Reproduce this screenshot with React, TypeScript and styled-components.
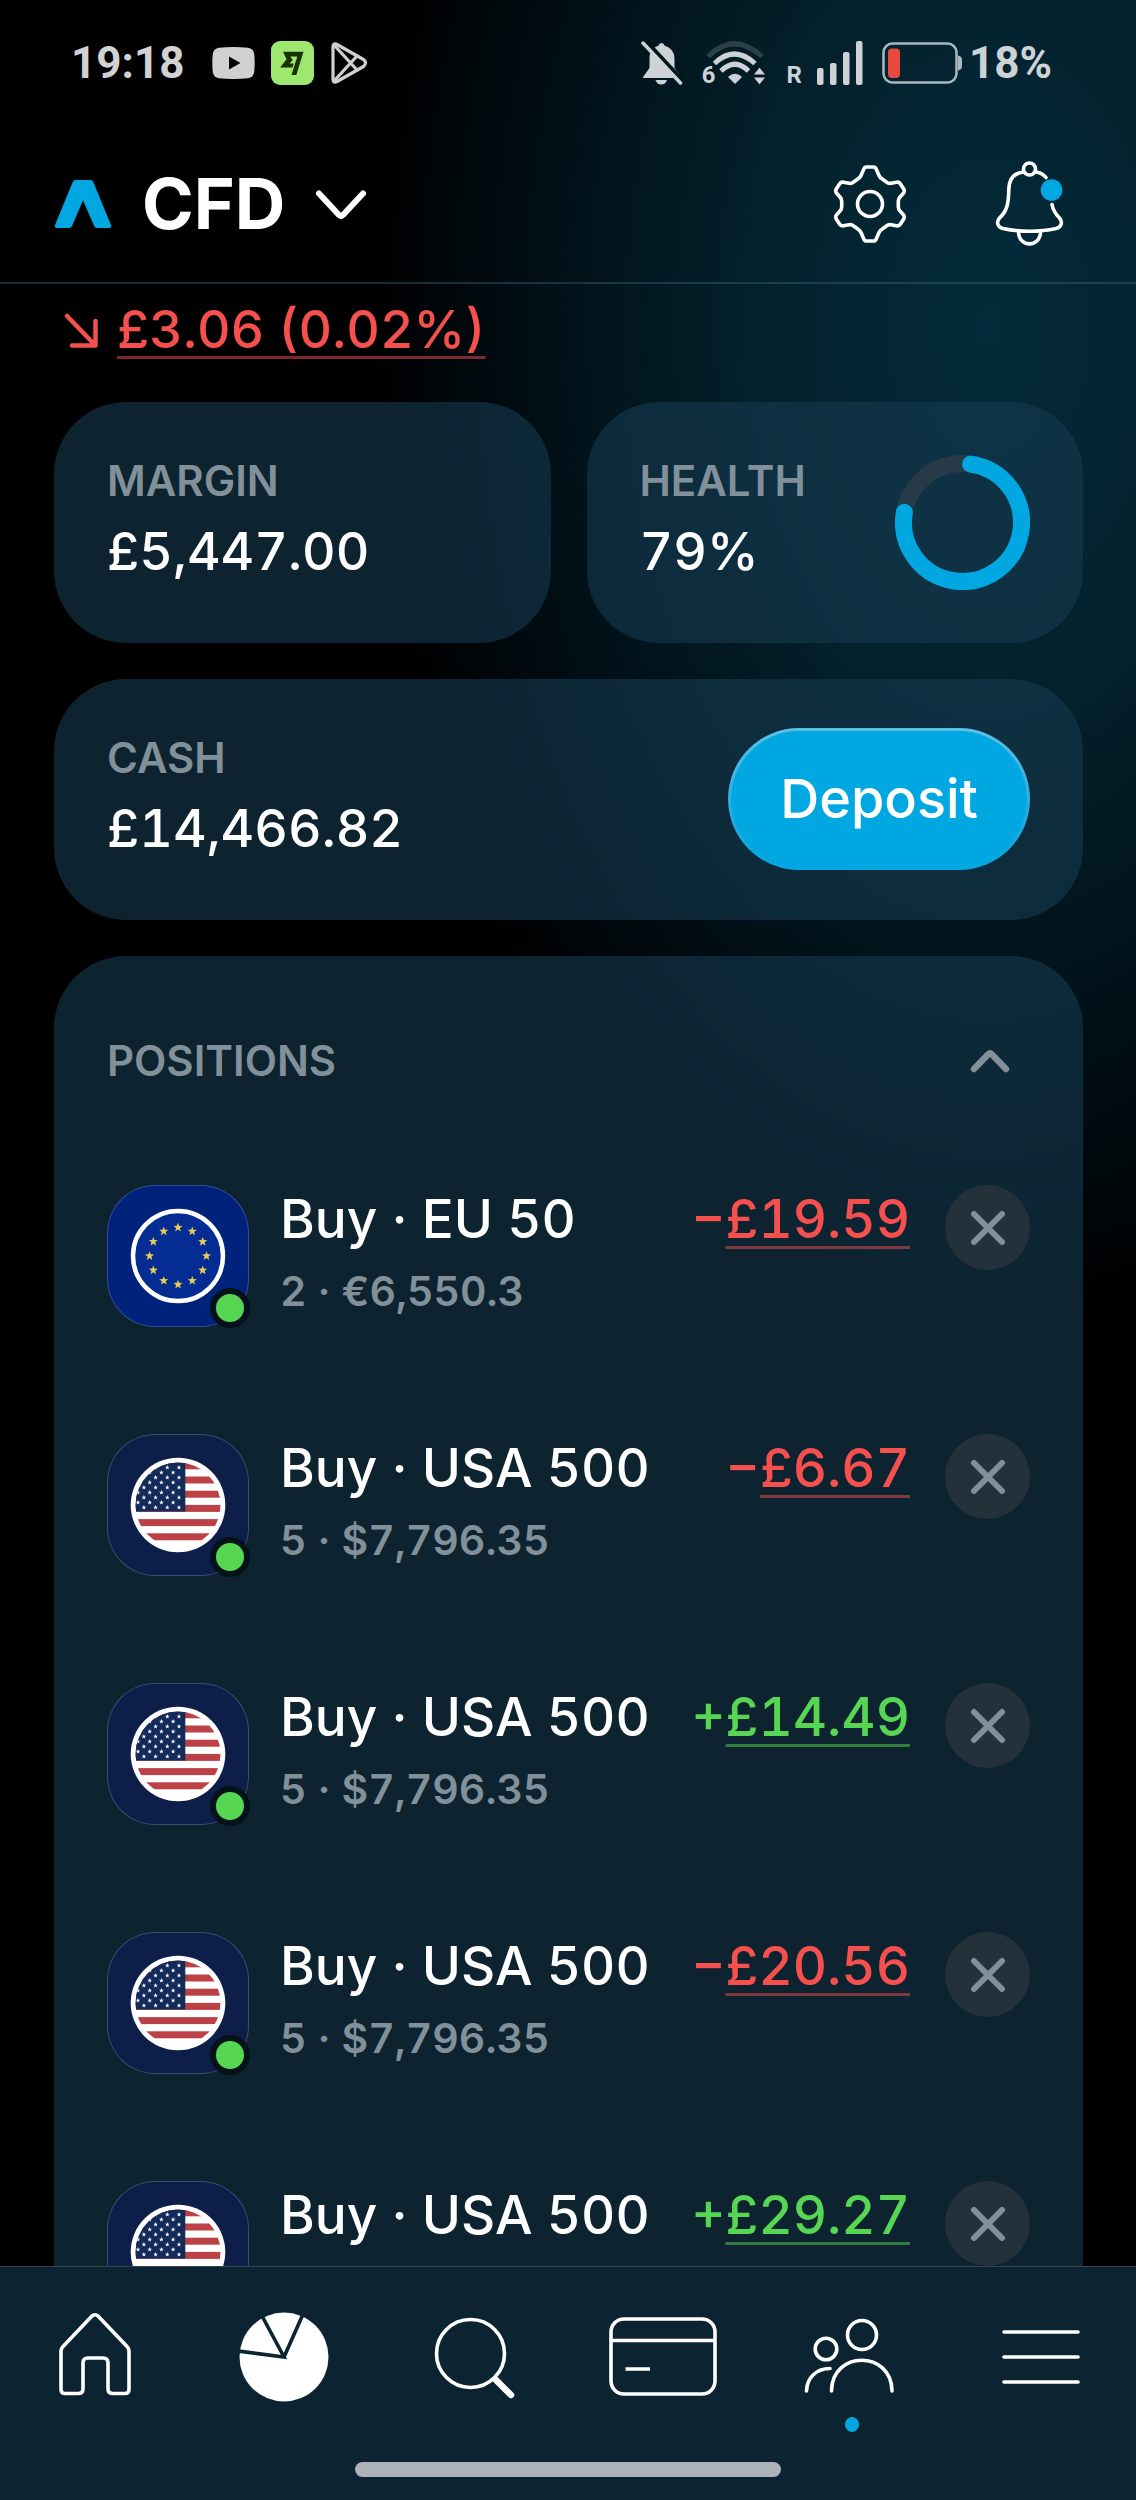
import React from "react";
import styled, { createGlobalStyle } from "styled-components";

const GlobalStyle = createGlobalStyle`
  *, *::before, *::after { box-sizing: border-box; }
  body { margin: 0; background: #000; }
  button, a { font: inherit; color: inherit; }
  h1, h2, p, ul { margin: 0; padding: 0; font: inherit; }
  svg { display: block; flex: none; }
`;

const color = {
  accent: "#00a7e1",
  loss: "#f5504e",
  gain: "#57d653",
  muted: "#82909a",
  status: "#ccd2d5",
  panel: "rgba(21, 58, 80, 0.6)",
  bar: "#0c2331",
};

const Screen = styled.div`
  height: 100vh;
  display: flex;
  flex-direction: column;
  overflow: hidden;
  color: #fff;
  font-family: Inter, "Liberation Sans", sans-serif;
  font-variant-numeric: tabular-nums;
  background:
    radial-gradient(ellipse 54% 40% at 87% 13%, #042b3b 0%, #03202b 40%, #01121a 68%, transparent 100%),
    #000;
`;

const StatusBar = styled.div`
  flex: none;
  height: 126px;
  padding: 0 84px 0 71px;
  display: flex;
  align-items: center;
  justify-content: space-between;
  color: ${color.status};
  font-family: Roboto, sans-serif;
  font-size: 44px;
  line-height: 56px;
  font-weight: 700;
`;

const StatusGroup = styled.div<{ $gap: number }>`
  display: flex;
  align-items: center;
  gap: ${(p) => p.$gap}px;
`;

const Clock = styled.time`
  color: #d2d2d2;
  margin-right: 12px;
`;

const BatteryGroup = styled.div`
  display: flex;
  align-items: center;
  gap: 6px;
`;

const RadioGroup = styled.div`
  display: flex;
  align-items: flex-end;
`;

const TinyMark = styled.span<{ $space: number }>`
  font-size: 24px;
  line-height: 20px;
  margin-right: ${(p) => p.$space}px;
`;

const AppHeader = styled.header`
  flex: none;
  height: 158px;
  padding: 0 69px 0 54px;
  display: flex;
  align-items: center;
  justify-content: space-between;
  border-bottom: 2px solid rgba(70, 120, 145, 0.35);
`;

const PlainButton = styled.button`
  display: flex;
  align-items: center;
  justify-content: center;
  padding: 0;
  border: 0;
  background: none;
  cursor: pointer;
`;

const AccountButton = styled(PlainButton)`
  gap: 30px;
`;

const AccountName = styled.span`
  font-size: 70px;
  line-height: 80px;
  font-weight: 700;
`;

const HeaderActions = styled.div`
  display: flex;
  align-items: center;
  gap: 84px;
`;

const Content = styled.main`
  flex: 1;
  min-height: 0;
  overflow-y: auto;
  scrollbar-width: none;
  padding: 10px 53px 0 54px;
  display: flex;
  flex-direction: column;
  gap: 36px;
`;

const Summary = styled.p`
  display: flex;
  align-items: center;
  gap: 18px;
  padding-left: 10px;
  font-size: 52px;
  line-height: 72px;
  font-weight: 500;
  color: ${color.loss};
`;

const Underlined = styled.span`
  text-decoration: underline;
  text-decoration-thickness: 3px;
  text-underline-offset: 8px;
  text-decoration-skip-ink: none;
  text-decoration-color: color-mix(in srgb, currentColor 50%, transparent);
`;

const StatGrid = styled.div`
  flex: none;
  display: grid;
  grid-template-columns: 1fr 1fr;
  gap: 36px;
`;

const Card = styled.section`
  flex: none;
  border-radius: 72px;
  background: ${color.panel};
  padding: 51px 53px 52px;
  display: flex;
  align-items: center;
  justify-content: space-between;
`;

const Stat = styled.div`
  display: flex;
  flex-direction: column;
  gap: 8px;
  padding-bottom: 4px;
`;

const Label = styled.h2`
  font-size: 42px;
  line-height: 56px;
  font-weight: 600;
  color: ${color.muted};
`;

const Value = styled.p`
  font-size: 52px;
  line-height: 70px;
  font-weight: 500;
`;

const DepositButton = styled.button`
  height: 142px;
  margin: -2px 0;
  padding: 0 49px;
  border: 3px solid transparent;
  border-radius: 71px;
  background:
    linear-gradient(${color.accent}, ${color.accent}) padding-box,
    linear-gradient(#5cc0e6, #2cade0 55%, ${color.accent}) border-box;
  color: #fff;
  font-size: 54px;
  font-weight: 500;
  line-height: 64px;
  cursor: pointer;
`;

const PositionsCard = styled.section`
  flex: none;
  border-radius: 72px 72px 0 0;
  background: ${color.panel};
  padding: 52px 53px 107px;
`;

const PositionsHead = styled.div`
  height: 106px;
  margin-bottom: 71px;
  display: flex;
  align-items: center;
  justify-content: space-between;
`;

const CollapseButton = styled(PlainButton)`
  width: 80px;
  height: 80px;
`;

const PositionList = styled.ul`
  list-style: none;
  display: flex;
  flex-direction: column;
  gap: 107px;
`;

const PositionRow = styled.li`
  display: flex;
  align-items: flex-start;
`;

const Tile = styled.div<{ $bg: string }>`
  position: relative;
  flex: none;
  width: 142px;
  height: 142px;
  margin-right: 31px;
  display: grid;
  place-items: center;
  border-radius: 48px;
  border: 1px solid rgba(255, 255, 255, 0.2);
  background: ${(p) => p.$bg};
`;

const OpenDot = styled.span`
  position: absolute;
  right: -2px;
  bottom: -2px;
  width: 40px;
  height: 40px;
  border-radius: 50%;
  border: 6px solid #04121a;
  background: ${color.gain};
`;

const Names = styled.div`
  flex: 1;
  min-width: 0;
  display: flex;
  flex-direction: column;
  gap: 10px;
`;

const Instrument = styled.p`
  font-size: 53px;
  line-height: 68px;
  font-weight: 500;
`;

const Holding = styled.p`
  font-size: 41px;
  line-height: 56px;
  font-weight: 600;
  color: ${color.muted};
`;

const Result = styled.p<{ $gain: boolean }>`
  margin-right: 35px;
  font-size: 53px;
  line-height: 68px;
  font-weight: 500;
  color: ${(p) => (p.$gain ? color.gain : color.loss)};
`;

const CloseButton = styled(PlainButton)`
  flex: none;
  width: 85px;
  height: 85px;
  border-radius: 50%;
  background: #23313b;
`;

const BottomBar = styled.footer`
  flex: none;
  height: 234px;
  border-top: 1px solid #33434f;
  background: ${color.bar};
  display: flex;
  flex-direction: column;
  align-items: center;
`;

const Tabs = styled.nav`
  width: 100%;
  height: 180px;
  display: grid;
  grid-template-columns: repeat(6, 1fr);
`;

const Tab = styled.a`
  position: relative;
  display: flex;
  align-items: center;
  justify-content: center;
`;

const TabDot = styled.span`
  position: absolute;
  left: calc(50% - 7px);
  bottom: 15px;
  width: 14px;
  height: 15px;
  border-radius: 50%;
  background: ${color.accent};
`;

const HomeHandle = styled.div`
  width: 37.5%;
  height: 15px;
  margin-top: 15px;
  border-radius: 8px;
  background: #abb2b9;
`;

const line = {
  fill: "none",
  stroke: "currentColor",
  strokeLinecap: "round" as const,
  strokeLinejoin: "round" as const,
};

function star(cx: number, cy: number, r: number) {
  const pts: string[] = [];
  for (let i = 0; i < 10; i++) {
    const a = -Math.PI / 2 + (i * Math.PI) / 5;
    const rad = i % 2 ? r * 0.42 : r;
    pts.push(`${(cx + rad * Math.cos(a)).toFixed(2)},${(cy + rad * Math.sin(a)).toFixed(2)}`);
  }
  return pts.join(" ");
}

function EuFlag() {
  return (
    <svg width="96" height="96" viewBox="-48 -48 96 96" aria-hidden="true">
      <circle r="45" fill="#042c92" stroke="#fff" strokeWidth="4.5" />
      {Array.from({ length: 12 }, (_, i) => {
        const a = (i * Math.PI) / 6;
        return <polygon key={i} points={star(28.5 * Math.sin(a), -28.5 * Math.cos(a), 4.8)} fill="#e6cb54" />;
      })}
    </svg>
  );
}

function UsFlag({ id }: { id: string }) {
  const stars: React.ReactNode[] = [];
  for (let row = 0; row < 9; row++) {
    for (let col = 0; col < 5; col++) {
      const x = 1 - col * 11.7 - (row % 2 ? 5.9 : 0);
      stars.push(<polygon key={`${row}-${col}`} points={star(x, -37.5 + row * 5, 2.4)} fill="#fff" />);
    }
  }
  return (
    <svg width="96" height="96" viewBox="-48 -48 96 96" aria-hidden="true">
      <clipPath id={id}>
        <circle r="42.5" />
      </clipPath>
      <circle r="47.3" fill="#fff" />
      <g clipPath={`url(#${id})`}>
        {[0, 1, 2, 3, 4, 5].map((i) => (
          <rect key={i} x="-43" y={-42.7 + i * 14.2} width="86" height="7" fill="#bb4147" />
        ))}
        <rect x="-43" y="-43" width="50.3" height="49.5" fill="#132b5b" />
        {stars}
      </g>
    </svg>
  );
}

const YouTubeIcon = () => (
  <svg width="43" height="32" viewBox="0 0 43 32" aria-hidden="true">
    <path d="M7 .8Q21.5-.8 36 .8Q41.500 1.500 42.200 7Q43.200 16 42.200 25Q41.500 30.500 36 31.200Q21.500 32.800 7 31.200Q1.500 30.500.8 25Q-.2 16 .8 7Q1.500 1.500 7 .8Z" fill="#d0d0d0" />
    <path d="M17 9.500L28.500 16L17 22.500Z" fill="#000" />
  </svg>
);

const TransferIcon = () => (
  <svg width="43" height="44" viewBox="0 0 43 44" aria-hidden="true">
    <rect width="43" height="44" rx="9" fill="#9fe870" />
    <path d="M12 10.700H32.500L25.300 34H20.500L26.300 15.500H19.300L21.700 19L18.600 22.600H22.800L21.500 26.500H9.200L15.500 18.300Z" fill="#163300" />
  </svg>
);

const PlayStoreIcon = () => (
  <svg width="38" height="44" viewBox="0 0 38 44" {...line} stroke="#d0d0d0" strokeWidth="3.200" aria-hidden="true">
    <path d="M3 6Q3 1.500 7 3.500L33.500 18.500Q37.500 22 33.500 25.500L7 40.500Q3 42.500 3 38Z" />
    <path d="M4.500 4.500L27 29M4.500 39.500L27 15" />
  </svg>
);

const SilentIcon = () => (
  <svg width="42" height="44" viewBox="0 0 42 44" aria-hidden="true">
    <path d="M17.500 4.500Q18 2 20.500 2Q23 2 23.500 4.500Q33 7.500 33.500 17V27L38 33.500V37H2V36L8.500 27V17Q8.500 7.500 17.500 4.500Z" fill="currentColor" />
    <path d="M14.500 39H26Q24.500 43.500 20.300 43.500Q16 43.500 14.500 39Z" fill="currentColor" />
    <path d="M5 0L42 40" stroke="#02141b" strokeWidth="4" />
    <path d="M2 2L39.500 42" stroke="currentColor" strokeWidth="3.500" strokeLinecap="round" />
  </svg>
);

const WifiIcon = () => (
  <svg width="64" height="44" viewBox="0 0 64 44" fill="none" stroke="currentColor" strokeWidth="5" aria-hidden="true">
    <path d="M4 15.500Q30 -10 58 15.500" stroke="#2a3f48" />
    <path d="M10.500 22.500Q30 3.500 51 22.500" />
    <path d="M17 30Q31 16.500 44.500 30" />
    <path d="M31 43L24 36Q31 29.500 38 36Z" fill="currentColor" stroke="none" />
    <path d="M49 34L55.500 26L62 34ZM49 36L55.500 44L62 36Z" fill="currentColor" stroke="#02161e" strokeWidth="1" />
  </svg>
);

const SignalIcon = () => (
  <svg width="46" height="44" viewBox="0 0 46 44" fill="currentColor" aria-hidden="true">
    <rect x="0" y="27" width="6.500" height="17" rx="2" />
    <rect x="13" y="22" width="6.500" height="22" rx="2" />
    <rect x="26" y="11" width="6.500" height="33" rx="2" />
    <rect x="39" y="0" width="6.500" height="44" rx="2" />
  </svg>
);

const BatteryIcon = () => (
  <svg width="81" height="42" viewBox="0 0 81 42" aria-hidden="true">
    <rect x="1.500" y="1.500" width="73" height="39" rx="9" fill="none" stroke="#a9b9bf" strokeWidth="2.500" />
    <rect x="6" y="6.500" width="12" height="29.500" rx="4" fill="#e8493e" />
    <path d="M76 13.500Q80 14 80 18V24Q80 28 76 28.500Z" fill="#a9b9bf" />
  </svg>
);

const BrandIcon = () => (
  <svg width="58" height="50" viewBox="0 0 58 50" aria-hidden="true">
    <path d="M21.500 1H36.500Q38.500 1 39.300 3L57 46Q57.800 49 55 49H43Q41 49 40.200 47L29 21.500L18 47Q17.200 49 15 49H3Q.2 49 1 46L18.700 3Q19.500 1 21.500 1Z" fill={color.accent} />
  </svg>
);

const ChevronDownIcon = () => (
  <svg width="52" height="32" viewBox="0 0 52 32" {...line} strokeWidth="6" aria-hidden="true">
    <path d="M4 5.500L24 27Q26 29 28 27L48 5.500" />
  </svg>
);

const ChevronUpIcon = () => (
  <svg width="40" height="24" viewBox="0 0 40 24" {...line} stroke={color.muted} strokeWidth="6.500" aria-hidden="true">
    <path d="M4 20L18 5.500Q20 3.500 22 5.500L36 20" />
  </svg>
);

const ArrowIcon = () => (
  <svg width="35" height="35" viewBox="0 0 35 35" {...line} strokeWidth="4.500" aria-hidden="true">
    <path d="M3 3L31 32M31.500 8V32.500H8" />
  </svg>
);

const GearIcon = () => (
  <svg width="78" height="84" viewBox="1 0 78 84" {...line} strokeWidth="3.600" aria-hidden="true">
    <path d="M36.500 5H43.500Q45.500 5 46.300 7.200L49 13.500Q50 16 52.500 17.200L57.500 20.700Q59 21.700 61 21.300L66.500 20.200Q69 19.700 70.300 21.700L73.600 26.800Q75 29 73.600 31L70 35Q68.300 37 68.300 39V45Q68.300 47 70 49L73.600 53Q75 55 73.600 57.200L70.300 62.300Q69 64.300 66.500 63.800L61 62.700Q59 62.300 57.500 63.300L52.500 66.800Q50 68 49 70.500L46.300 76.800Q45.500 79 43.500 79H36.500Q34.500 79 33.700 76.800L31 70.500Q30 68 27.500 66.800L22.500 63.300Q21 62.300 19 62.700L13.500 63.800Q11 64.300 9.700 62.300L6.400 57.200Q5 55 6.400 53L10 49Q11.700 47 11.700 45V39Q11.700 37 10 35L6.400 31Q5 29 6.400 26.800L9.700 21.700Q11 19.700 13.500 20.200L19 21.300Q21 21.700 22.500 20.700L27.500 17.200Q30 16 31 13.500L33.700 7.200Q34.500 5 36.500 5Z" />
    <circle cx="40" cy="42" r="12.500" />
  </svg>
);

const BellIcon = () => (
  <svg width="74" height="88" viewBox="0 0 74 88" {...line} strokeWidth="3.600" aria-hidden="true">
    <circle cx="36.500" cy="9" r="6" />
    <path d="M30.500 12C21 13 16 19 15.800 30C15.500 44 14 51 6.500 58C3 62 4.500 67 10 68.500C26 72.200 47 72.200 63 68.500C68.500 67 70 62 66.500 58C62 53.500 60 50 59 44.500" />
    <path d="M42.500 12Q49 12.500 53 17.500" />
    <path d="M25.500 71.500C25.500 88 47.500 88 47.500 71.500" />
    <circle cx="58.500" cy="30" r="10.800" fill={color.accent} stroke="none" />
  </svg>
);

const CloseIcon = () => (
  <svg width="36" height="36" viewBox="0 0 36 36" {...line} stroke={color.muted} strokeWidth="6" aria-hidden="true">
    <path d="M4 4L32 32M32 4L4 32" />
  </svg>
);

const HealthRing = () => (
  <svg width="135" height="135" viewBox="-67.500 -67.500 135 135" fill="none" strokeWidth="17" aria-hidden="true">
    <circle r="59" stroke="#263b47" />
    <path d="M8.200 -58.400A59 59 0 1 1 -58.100 -10.200" stroke={color.accent} strokeLinecap="round" />
  </svg>
);

const HomeIcon = () => (
  <svg width="74" height="90" viewBox="0 0 74 90" {...line} strokeWidth="3.600" aria-hidden="true">
    <path d="M34 4L5 34.500Q3 36.500 3 39V77Q3 81.500 7 81.500H20Q25 81.500 25 77V51Q25 46 30 46H45Q50 46 50 51V77Q50 81.500 55 81.500H67Q71 81.500 71 77V39Q71 36.500 69 34.500L40 4Q37 1.500 34 4Z" />
  </svg>
);

const PortfolioIcon = () => (
  <svg width="90" height="90" viewBox="0 0 90 90" aria-hidden="true">
    <circle cx="45" cy="45" r="44.500" fill="#fff" />
    <path d="M-1 39L45 45L22 2M45 45L65 0" fill="none" stroke={color.bar} strokeWidth="3.600" />
  </svg>
);

const SearchIcon = () => (
  <svg width="84" height="84" viewBox="-3 -1 84 84" {...line} strokeWidth="3.600" aria-hidden="true">
    <circle cx="36.500" cy="37.500" r="34" />
    <path d="M62 64L77 79" strokeWidth="6.500" />
  </svg>
);

const CardIcon = () => (
  <svg width="108" height="80" viewBox="0 0 108 80" {...line} strokeWidth="3.600" aria-hidden="true">
    <rect x="2" y="2" width="104" height="75" rx="13" />
    <path d="M2 23.500H106M16.500 52H41" strokeLinecap="butt" />
  </svg>
);

const PeopleIcon = () => (
  <svg width="97" height="80" viewBox="0 0 97 80" {...line} strokeWidth="3.600" aria-hidden="true">
    <circle cx="59" cy="18" r="14.500" />
    <circle cx="23" cy="32" r="10.800" />
    <path d="M28.500 74C29 33 88.500 33 89 74M3.500 74C4 60 14 51.500 27 51.500" />
  </svg>
);

const MenuIcon = () => (
  <svg width="78" height="56" viewBox="0 0 78 56" {...line} strokeWidth="3.600" aria-hidden="true">
    <path d="M2 3H76M2 28H76M2 53H76" />
  </svg>
);

type Position = { name: string; holding?: string; sign: string; amount: string; flag: "eu" | "us" };

const positions: Position[] = [
  { name: "Buy · EU 50", holding: "2 · €6,550.3", sign: "−", amount: "£19.59", flag: "eu" },
  { name: "Buy · USA 500", holding: "5 · $7,796.35", sign: "−", amount: "£6.67", flag: "us" },
  { name: "Buy · USA 500", holding: "5 · $7,796.35", sign: "+", amount: "£14.49", flag: "us" },
  { name: "Buy · USA 500", holding: "5 · $7,796.35", sign: "−", amount: "£20.56", flag: "us" },
  { name: "Buy · USA 500", sign: "+", amount: "£29.27", flag: "us" },
];

const tabs = [
  { label: "Home", icon: <HomeIcon /> },
  { label: "Portfolio", icon: <PortfolioIcon /> },
  { label: "Search", icon: <SearchIcon /> },
  { label: "Card", icon: <CardIcon /> },
  { label: "Community", icon: <PeopleIcon />, unread: true },
  { label: "Menu", icon: <MenuIcon /> },
];

export default function App() {
  return (
    <>
      <GlobalStyle />
      <Screen>
        <StatusBar>
          <StatusGroup $gap={16}>
            <Clock>19:18</Clock>
            <YouTubeIcon />
            <TransferIcon />
            <PlayStoreIcon />
          </StatusGroup>
          <StatusGroup $gap={19}>
            <SilentIcon />
            <RadioGroup>
              <TinyMark $space={-12}>6</TinyMark>
              <WifiIcon />
            </RadioGroup>
            <RadioGroup>
              <TinyMark $space={15}>R</TinyMark>
              <SignalIcon />
            </RadioGroup>
            <BatteryGroup>
              <BatteryIcon />
              <span>18%</span>
            </BatteryGroup>
          </StatusGroup>
        </StatusBar>

        <AppHeader>
          <AccountButton type="button">
            <BrandIcon />
            <AccountName>CFD</AccountName>
            <ChevronDownIcon />
          </AccountButton>
          <HeaderActions>
            <PlainButton type="button" aria-label="Settings">
              <GearIcon />
            </PlainButton>
            <PlainButton type="button" aria-label="Notifications">
              <BellIcon />
            </PlainButton>
          </HeaderActions>
        </AppHeader>

        <Content>
          <Summary>
            <ArrowIcon />
            <Underlined>£3.06 (0.02%)</Underlined>
          </Summary>

          <StatGrid>
            <Card>
              <Stat>
                <Label>MARGIN</Label>
                <Value>£5,447.00</Value>
              </Stat>
            </Card>
            <Card>
              <Stat>
                <Label>HEALTH</Label>
                <Value>79%</Value>
              </Stat>
              <HealthRing />
            </Card>
          </StatGrid>

          <Card>
            <Stat>
              <Label>CASH</Label>
              <Value>£14,466.82</Value>
            </Stat>
            <DepositButton type="button">Deposit</DepositButton>
          </Card>

          <PositionsCard>
            <PositionsHead>
              <Label>POSITIONS</Label>
              <CollapseButton type="button" aria-label="Collapse positions">
                <ChevronUpIcon />
              </CollapseButton>
            </PositionsHead>
            <PositionList>
              {positions.map((p, i) => (
                <PositionRow key={i}>
                  <Tile $bg={p.flag === "eu" ? "#01227b" : "#0d1e49"}>
                    {p.flag === "eu" ? <EuFlag /> : <UsFlag id={`flag-${i}`} />}
                    <OpenDot />
                  </Tile>
                  <Names>
                    <Instrument>{p.name}</Instrument>
                    {p.holding && <Holding>{p.holding}</Holding>}
                  </Names>
                  <Result $gain={p.sign === "+"}>
                    {p.sign}
                    <Underlined>{p.amount}</Underlined>
                  </Result>
                  <CloseButton type="button" aria-label={`Close ${p.name}`}>
                    <CloseIcon />
                  </CloseButton>
                </PositionRow>
              ))}
            </PositionList>
          </PositionsCard>
        </Content>

        <BottomBar>
          <Tabs>
            {tabs.map((t) => (
              <Tab key={t.label} href="#" aria-label={t.label}>
                {t.icon}
                {t.unread && <TabDot />}
              </Tab>
            ))}
          </Tabs>
          <HomeHandle />
        </BottomBar>
      </Screen>
    </>
  );
}
